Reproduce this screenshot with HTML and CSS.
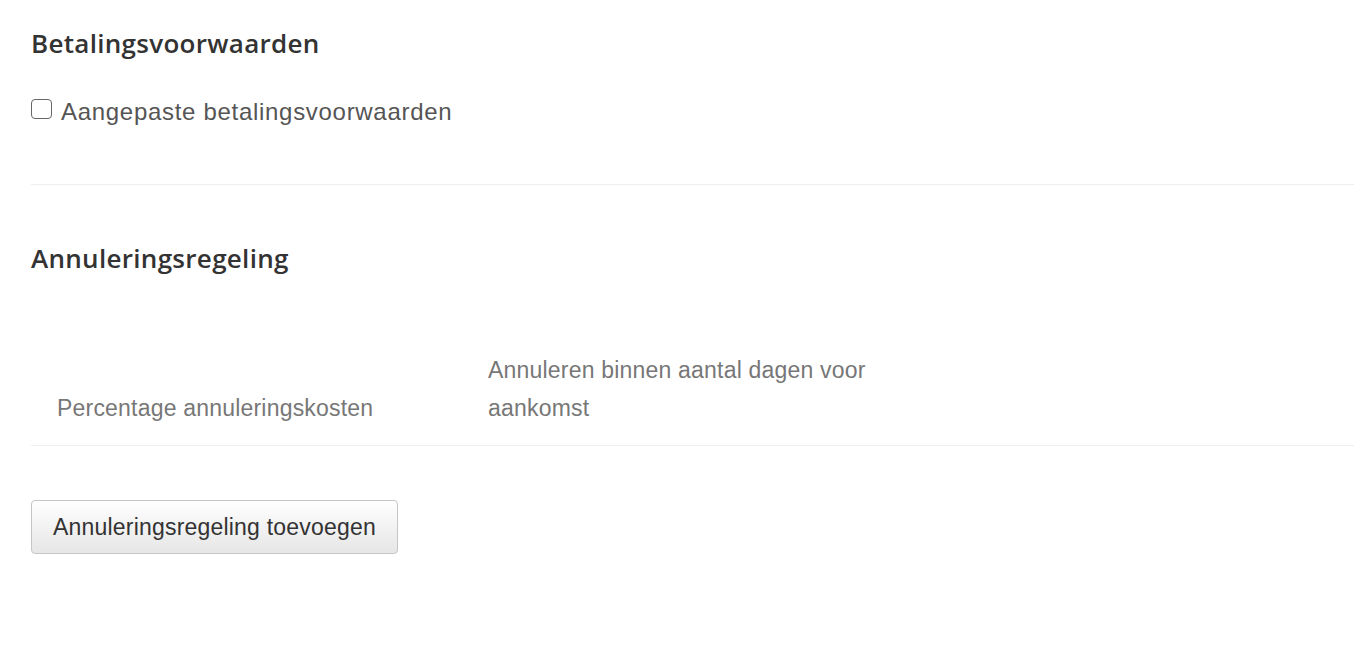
FILE: index.html
```html
<!DOCTYPE html>
<html lang="nl">
<head>
    <meta charset="UTF-8">
    <meta name="viewport" content="width=device-width, initial-scale=1.0">
    <title>Voorwaarden</title>
    <link rel="stylesheet" href="styles.css">
</head>
<body>

<div class="page">
    <section class="section">
        <h2>Betalingsvoorwaarden</h2>
        <label class="check">
            <input type="checkbox">
            <span>Aangepaste betalingsvoorwaarden</span>
        </label>
    </section>

    <hr class="divider">

    <section class="section">
        <h2 class="second">Annuleringsregeling</h2>
        <table class="rules">
            <thead>
                <tr>
                    <th class="col-pct">Percentage annuleringskosten</th>
                    <th class="col-days">Annuleren binnen aantal dagen voor aankomst</th>
                    <th></th>
                </tr>
            </thead>
        </table>
        <button class="btn">Annuleringsregeling toevoegen</button>
    </section>
</div>

</body>
</html>
```

FILE: styles.css
```css
body {
    margin: 0;
    background: #fff;
    font-family: "Liberation Sans", Arial, sans-serif;
    color: #333;
}
.page {
    padding: 22px 0 0 31px;
}
h2 {
    font-family: "Open Sans", "Liberation Sans", sans-serif;
    font-weight: 600;
    font-size: 26px;
    letter-spacing: 0.3px;
    color: #333;
    margin: 0;
    line-height: 42px;
}
.check {
    display: flex;
    align-items: flex-start;
    margin-top: 34px;
    font-size: 24px;
    letter-spacing: 0.7px;
    color: #555;
    line-height: 28px;
}
.check input {
    width: 21px;
    height: 20px;
    margin: 1px 9px 0 0;
    appearance: none;
    border: 1px solid #666;
    border-radius: 4px;
    background: #fff;
}
.divider {
    border: none;
    border-top: 1px solid #eee;
    margin: 58px 0 0 0;
}
.second {
    margin-top: 52px;
}
.rules {
    width: 100%;
    border-collapse: collapse;
    margin-top: 72px;
}
.rules th {
    box-sizing: border-box;
    text-align: left;
    font-weight: normal;
    font-size: 23px;
    letter-spacing: 0.2px;
    line-height: 38px;
    color: #777;
    vertical-align: bottom;
    padding: 0 0 18px 0;
    border-bottom: 1px solid #eee;
}
.rules .col-pct {
    width: 457px;
    padding-left: 26px;
}
.rules .col-days {
    width: 420px;
}
.btn {
    margin-top: 54px;
    height: 54px;
    padding: 0 21px;
    font-family: "Liberation Sans", Arial, sans-serif;
    font-size: 23px;
    letter-spacing: 0.2px;
    color: #333;
    border: 1px solid #c6c6c6;
    border-radius: 4px;
    background: linear-gradient(#fff, #e6e6e6);
    cursor: pointer;
}
```
